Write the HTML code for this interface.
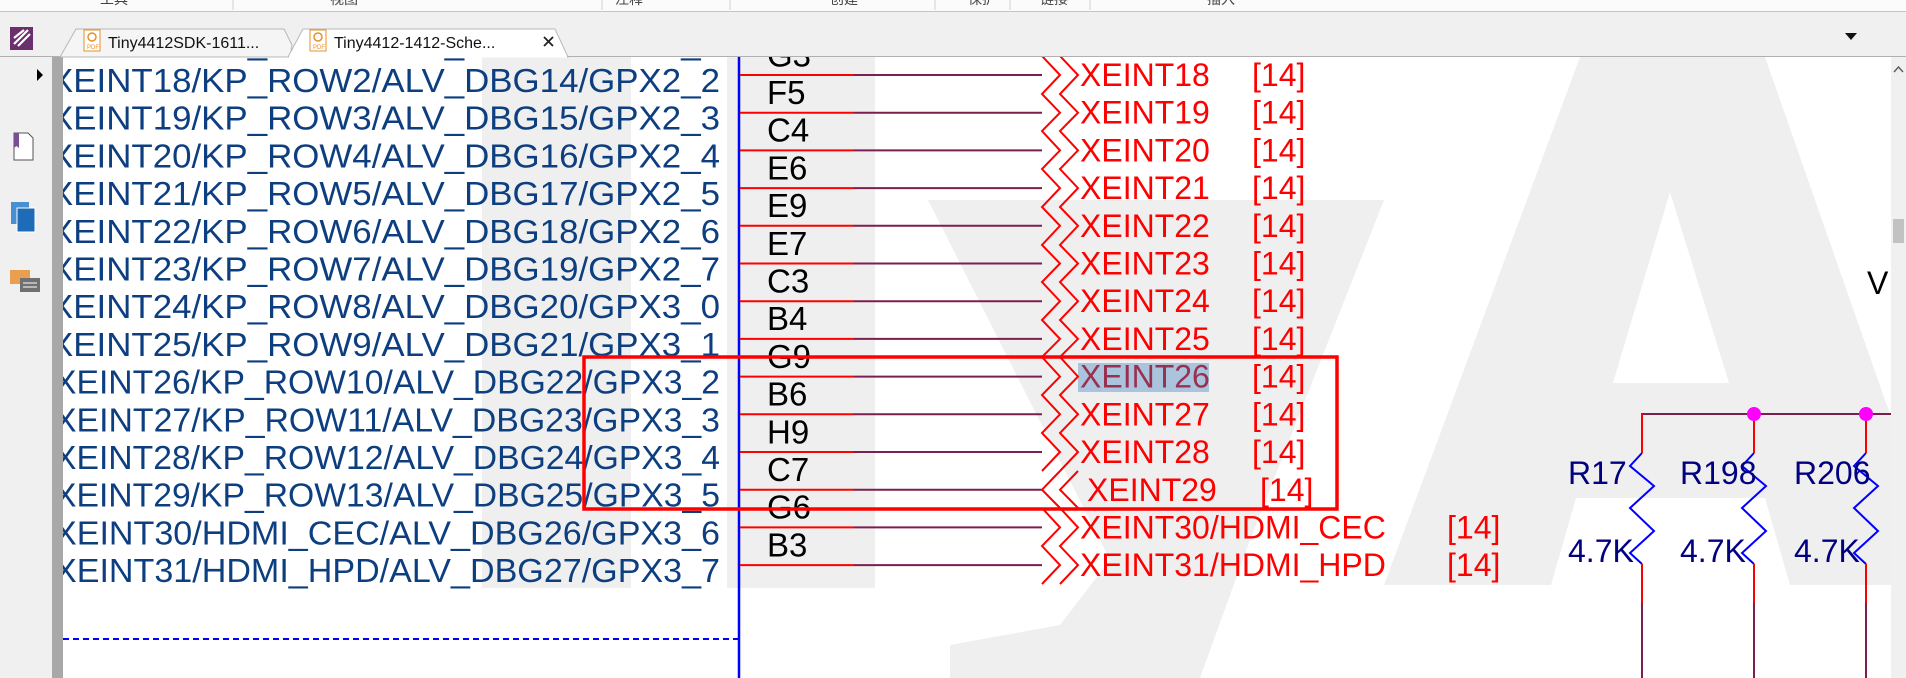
<!DOCTYPE html>
<html><head><meta charset="utf-8"><style>
html,body{margin:0;padding:0;background:#fff;}
svg{display:block;}
text{font-family:"Liberation Sans","Noto Sans CJK SC",sans-serif;}
</style></head><body>
<svg width="1906" height="678" viewBox="0 0 1906 678" xmlns="http://www.w3.org/2000/svg">
<defs>
<clipPath id="content"><rect x="63" y="57" width="1828" height="621"/></clipPath>
</defs>
<rect x="0" y="0" width="1906" height="678" fill="#fff"/>
<g clip-path="url(#content)">
<!-- watermark -->
<g fill="#efefef">
<rect x="482" y="57" width="149" height="531"/>
<rect x="727" y="57" width="148" height="531"/>
<polygon points="928,200 1384,200 1250,540 1200,678 950,678 950,645 1060,625 1110,560"/>
<polygon points="1580,57 1765,57 1906,460 1906,585 1790,585 1765,498 1576,498 1551,585 1384,585"/>
</g>
<polygon points="1670,192 1613,383 1729,383" fill="#fff"/>
<!-- left text rows -->
<g fill="#0d3f80" font-size="33">
<text x="50" y="54" textLength="670" lengthAdjust="spacingAndGlyphs">XEINT17/KP_ROW1/ALV_DBG13/GPX2_1</text>
<text x="50" y="92" textLength="670" lengthAdjust="spacingAndGlyphs">XEINT18/KP_ROW2/ALV_DBG14/GPX2_2</text>
<text x="50" y="129.7" textLength="670" lengthAdjust="spacingAndGlyphs">XEINT19/KP_ROW3/ALV_DBG15/GPX2_3</text>
<text x="50" y="167.4" textLength="670" lengthAdjust="spacingAndGlyphs">XEINT20/KP_ROW4/ALV_DBG16/GPX2_4</text>
<text x="50" y="205.1" textLength="670" lengthAdjust="spacingAndGlyphs">XEINT21/KP_ROW5/ALV_DBG17/GPX2_5</text>
<text x="50" y="242.8" textLength="670" lengthAdjust="spacingAndGlyphs">XEINT22/KP_ROW6/ALV_DBG18/GPX2_6</text>
<text x="50" y="280.5" textLength="670" lengthAdjust="spacingAndGlyphs">XEINT23/KP_ROW7/ALV_DBG19/GPX2_7</text>
<text x="50" y="318.2" textLength="670" lengthAdjust="spacingAndGlyphs">XEINT24/KP_ROW8/ALV_DBG20/GPX3_0</text>
<text x="50" y="355.9" textLength="670" lengthAdjust="spacingAndGlyphs">XEINT25/KP_ROW9/ALV_DBG21/GPX3_1</text>
<text x="54" y="393.6" textLength="666" lengthAdjust="spacingAndGlyphs">XEINT26/KP_ROW10/ALV_DBG22/GPX3_2</text>
<text x="54" y="431.3" textLength="666" lengthAdjust="spacingAndGlyphs">XEINT27/KP_ROW11/ALV_DBG23/GPX3_3</text>
<text x="54" y="469" textLength="666" lengthAdjust="spacingAndGlyphs">XEINT28/KP_ROW12/ALV_DBG24/GPX3_4</text>
<text x="54" y="506.7" textLength="666" lengthAdjust="spacingAndGlyphs">XEINT29/KP_ROW13/ALV_DBG25/GPX3_5</text>
<text x="54" y="544.4" textLength="666" lengthAdjust="spacingAndGlyphs">XEINT30/HDMI_CEC/ALV_DBG26/GPX3_6</text>
<text x="54" y="582.1" textLength="666" lengthAdjust="spacingAndGlyphs">XEINT31/HDMI_HPD/ALV_DBG27/GPX3_7</text>
</g>
<!-- dashed line -->
<line x1="63" y1="639" x2="739" y2="639" stroke="#0000ff" stroke-width="2" stroke-dasharray="6,4"/>
<!-- blue vertical -->
<line x1="739" y1="57" x2="739" y2="678" stroke="#0000ff" stroke-width="2.5"/>
<!-- wires -->
<g stroke-width="2">
<g stroke="#ff0000">
<line x1="740" y1="75" x2="854" y2="75"/>
<line x1="740" y1="112.7" x2="854" y2="112.7"/>
<line x1="740" y1="150.4" x2="854" y2="150.4"/>
<line x1="740" y1="188.1" x2="854" y2="188.1"/>
<line x1="740" y1="225.8" x2="854" y2="225.8"/>
<line x1="740" y1="263.5" x2="854" y2="263.5"/>
<line x1="740" y1="301.2" x2="854" y2="301.2"/>
<line x1="740" y1="338.9" x2="854" y2="338.9"/>
<line x1="740" y1="376.6" x2="854" y2="376.6"/>
<line x1="740" y1="414.3" x2="854" y2="414.3"/>
<line x1="740" y1="452" x2="854" y2="452"/>
<line x1="740" y1="489.7" x2="854" y2="489.7"/>
<line x1="740" y1="527.4" x2="854" y2="527.4"/>
<line x1="740" y1="565.1" x2="854" y2="565.1"/>
</g>
<g stroke="#7a1f4e">
<line x1="854" y1="75" x2="1042" y2="75"/>
<line x1="854" y1="112.7" x2="1042" y2="112.7"/>
<line x1="854" y1="150.4" x2="1042" y2="150.4"/>
<line x1="854" y1="188.1" x2="1042" y2="188.1"/>
<line x1="854" y1="225.8" x2="1042" y2="225.8"/>
<line x1="854" y1="263.5" x2="1042" y2="263.5"/>
<line x1="854" y1="301.2" x2="1042" y2="301.2"/>
<line x1="854" y1="338.9" x2="1042" y2="338.9"/>
<line x1="854" y1="376.6" x2="1042" y2="376.6"/>
<line x1="854" y1="414.3" x2="1042" y2="414.3"/>
<line x1="854" y1="452" x2="1042" y2="452"/>
<line x1="854" y1="489.7" x2="1042" y2="489.7"/>
<line x1="854" y1="527.4" x2="1042" y2="527.4"/>
<line x1="854" y1="565.1" x2="1042" y2="565.1"/>
</g>
</g>
<!-- pin names -->
<g fill="#000" font-size="33">
<text x="767" y="66.3">G3</text>
<text x="767" y="104">F5</text>
<text x="767" y="141.7">C4</text>
<text x="767" y="179.4">E6</text>
<text x="767" y="217.1">E9</text>
<text x="767" y="254.8">E7</text>
<text x="767" y="292.5">C3</text>
<text x="767" y="330.2">B4</text>
<text x="767" y="367.9">G9</text>
<text x="767" y="405.6">B6</text>
<text x="767" y="443.3">H9</text>
<text x="767" y="481">C7</text>
<text x="767" y="518.7">G6</text>
<text x="767" y="556.4">B3</text>
</g>
<!-- highlight -->
<rect x="1078" y="363" width="131" height="29" fill="#a9c4dc"/>
<!-- chevrons -->
<g stroke="#ff0000" stroke-width="2" fill="none">
<path d="M1042,56 L1060,75 L1042,94 L1060,112.7 L1042,131 L1060,150.4 L1042,169 L1060,188.1 L1042,207 L1060,225.8 L1042,245 L1060,263.5 L1042,282 L1060,301.2 L1042,320 L1060,338.9 L1042,357 L1060,376.6 L1042,395 L1060,414.3 L1042,433 L1060,452 L1042,471"/>
<path d="M1060,471 L1042,489.7 L1060,508"/>
<path d="M1042,508 L1060,527.4 L1042,546 L1060,565.1 L1042,584"/>
<path d="M1060,56 L1078,75 L1060,94 L1078,112.7 L1060,131 L1078,150.4 L1060,169 L1078,188.1 L1060,207 L1078,225.8 L1060,245 L1078,263.5 L1060,282 L1078,301.2 L1060,320 L1078,338.9 L1060,357 L1078,376.6 L1060,395 L1078,414.3 L1060,433 L1078,452 L1060,471"/>
<path d="M1078,471 L1060,489.7 L1078,508"/>
<path d="M1060,508 L1078,527.4 L1060,546 L1078,565.1 L1060,584"/>
</g>
<!-- net labels -->
<g fill="#ff0000" font-size="32">
<text x="1080" y="86">XEINT18</text>
<text x="1080" y="123.7">XEINT19</text>
<text x="1080" y="161.4">XEINT20</text>
<text x="1080" y="199.1">XEINT21</text>
<text x="1080" y="236.8">XEINT22</text>
<text x="1080" y="274.5">XEINT23</text>
<text x="1080" y="312.2">XEINT24</text>
<text x="1080" y="349.9">XEINT25</text>
<text x="1080" y="387.6" fill="#9a3050">XEINT26</text>
<text x="1080" y="425.3">XEINT27</text>
<text x="1080" y="463">XEINT28</text>
<text x="1087" y="501">XEINT29</text>
<text x="1080" y="538.4">XEINT30/HDMI_CEC</text>
<text x="1080" y="576.1">XEINT31/HDMI_HPD</text>
<text x="1252" y="86">[14]</text>
<text x="1252" y="123.7">[14]</text>
<text x="1252" y="161.4">[14]</text>
<text x="1252" y="199.1">[14]</text>
<text x="1252" y="236.8">[14]</text>
<text x="1252" y="274.5">[14]</text>
<text x="1252" y="312.2">[14]</text>
<text x="1252" y="349.9">[14]</text>
<text x="1252" y="387.6">[14]</text>
<text x="1252" y="425.3">[14]</text>
<text x="1252" y="463">[14]</text>
<text x="1260" y="501">[14]</text>
<text x="1447" y="538.4">[14]</text>
<text x="1447" y="576.1">[14]</text>
</g>
<!-- red box -->
<rect x="584" y="357" width="753" height="152" fill="none" stroke="#ff0000" stroke-width="3.5"/>
<!-- right circuit -->
<g stroke-width="2" fill="none">
<polyline points="1642,440 1642,414 1906,414" stroke="#7a1f4e"/>
<line x1="1642" y1="414" x2="1642" y2="453" stroke="#ff0000"/>
<line x1="1754" y1="414" x2="1754" y2="453" stroke="#ff0000"/>
<line x1="1866" y1="414" x2="1866" y2="453" stroke="#ff0000"/>
<path d="M1642,453 L1630,466 L1654,486 L1630,508 L1654,531 L1630,553 L1642,564" stroke="#0000ff"/>
<path d="M1754,453 L1742,466 L1766,486 L1742,508 L1766,531 L1742,553 L1754,564" stroke="#0000ff"/>
<path d="M1866,453 L1854,466 L1878,486 L1854,508 L1878,531 L1854,553 L1866,564" stroke="#0000ff"/>
<line x1="1642" y1="564" x2="1642" y2="603" stroke="#ff0000"/>
<line x1="1754" y1="564" x2="1754" y2="603" stroke="#ff0000"/>
<line x1="1866" y1="564" x2="1866" y2="603" stroke="#ff0000"/>
<line x1="1642" y1="603" x2="1642" y2="678" stroke="#7a1f4e"/>
<line x1="1754" y1="603" x2="1754" y2="678" stroke="#7a1f4e"/>
<line x1="1866" y1="603" x2="1866" y2="678" stroke="#7a1f4e"/>
</g>
<circle cx="1754" cy="414" r="7" fill="#ff00ff"/>
<circle cx="1866" cy="414" r="7" fill="#ff00ff"/>
<g fill="#000080" font-size="32">
<text x="1568" y="484">R17</text>
<text x="1680" y="484">R198</text>
<text x="1794" y="484">R206</text>
<text x="1568" y="562">4.7K</text>
<text x="1680" y="562">4.7K</text>
<text x="1794" y="562">4.7K</text>
</g>
<text x="1867" y="294" font-size="32" fill="#000">VI</text>
</g>
<!-- right scrollbar -->
<rect x="1891" y="57" width="15" height="621" fill="#f0f0f0"/>
<rect x="1893" y="219" width="11" height="24" fill="#c2c2c2"/>
<path d="M1894,72 L1898.5,67 L1903,72" stroke="#606060" stroke-width="1.5" fill="none"/>
<!-- left sidebar -->
<rect x="0" y="57" width="52" height="621" fill="#f0f0f0"/>
<rect x="52" y="57" width="11" height="621" fill="#a8a8a8"/>
<path d="M37,69 L43,75 L37,81 Z" fill="#000"/>
<path d="M14,133 L28,133 L33,138 L33,160 L14,160 Z" fill="#fff" stroke="#555" stroke-width="1"/>
<path d="M14,133 L19,133 L19,148 L16.5,146 L14,148 Z" fill="#7a4e96"/>
<rect x="11" y="202" width="18" height="22" fill="#4a8fd0"/>
<rect x="17" y="208" width="18" height="24" fill="#1e6cb8" stroke="#fff" stroke-width="1"/>
<rect x="10" y="270" width="20" height="14" fill="#e8a050"/>
<rect x="20" y="278" width="20" height="14" fill="#707070"/>
<line x1="23" y1="283" x2="37" y2="283" stroke="#fff"/><line x1="23" y1="287" x2="37" y2="287" stroke="#fff"/>
<!-- top strip -->
<rect x="0" y="0" width="1906" height="57" fill="#f0f0f0"/>
<rect x="0" y="0" width="1906" height="11" fill="#fbfbfb"/>
<line x1="0" y1="11.5" x2="1906" y2="11.5" stroke="#c4c4c4"/>
<g fill="#444" font-size="14">
<text x="100" y="4">工具</text><text x="330" y="4">视图</text><text x="615" y="4">注释</text>
<text x="830" y="4">创建</text><text x="968" y="4">保护</text><text x="1040" y="4">链接</text><text x="1207" y="4">插入</text>
</g>
<g stroke="#d0d0d0"><line x1="233" y1="0" x2="233" y2="10"/><line x1="602" y1="0" x2="602" y2="10"/><line x1="730" y1="0" x2="730" y2="10"/><line x1="935" y1="0" x2="935" y2="10"/><line x1="1010" y1="0" x2="1010" y2="10"/><line x1="1090" y1="0" x2="1090" y2="10"/></g>
<!-- tab bar -->
<line x1="0" y1="56.5" x2="1906" y2="56.5" stroke="#b0b0b0"/>
<rect x="10" y="27" width="23" height="23" fill="#6b2f6e"/>
<path d="M14,44 L28,30 M18,46 L30,34 M14,38 L24,30" stroke="#fff" stroke-width="2.2" fill="none"/>
<path d="M60,57 L76,29 L284,29 L292,45 L290,57 Z" fill="#f5f5f5" stroke="#b8b8b8"/>
<path d="M288,57 L303,29 L555,29 L568,57 Z" fill="#fff" stroke="#b8b8b8"/>
<line x1="289" y1="56.5" x2="567" y2="56.5" stroke="#fff" stroke-width="2"/>
<g>
<rect x="84" y="30" width="16" height="21" fill="#fff" stroke="#e8902a"/>
<text x="87" y="49" font-size="6" fill="#e8902a">PDF</text>
<circle cx="92" cy="37" r="4" fill="none" stroke="#e8902a" stroke-width="1.5"/>
<rect x="310" y="30" width="16" height="21" fill="#fff" stroke="#e8902a"/>
<text x="313" y="49" font-size="6" fill="#e8902a">PDF</text>
<circle cx="318" cy="37" r="4" fill="none" stroke="#e8902a" stroke-width="1.5"/>
</g>
<text x="108" y="48" font-size="16" fill="#111">Tiny4412SDK-1611...</text>
<text x="334" y="48" font-size="16" fill="#111">Tiny4412-1412-Sche...</text>
<path d="M544,37 L553,46 M553,37 L544,46" stroke="#222" stroke-width="1.8"/>
<path d="M1845,33 L1857,33 L1851,40 Z" fill="#111"/>
</svg>
</body></html>
